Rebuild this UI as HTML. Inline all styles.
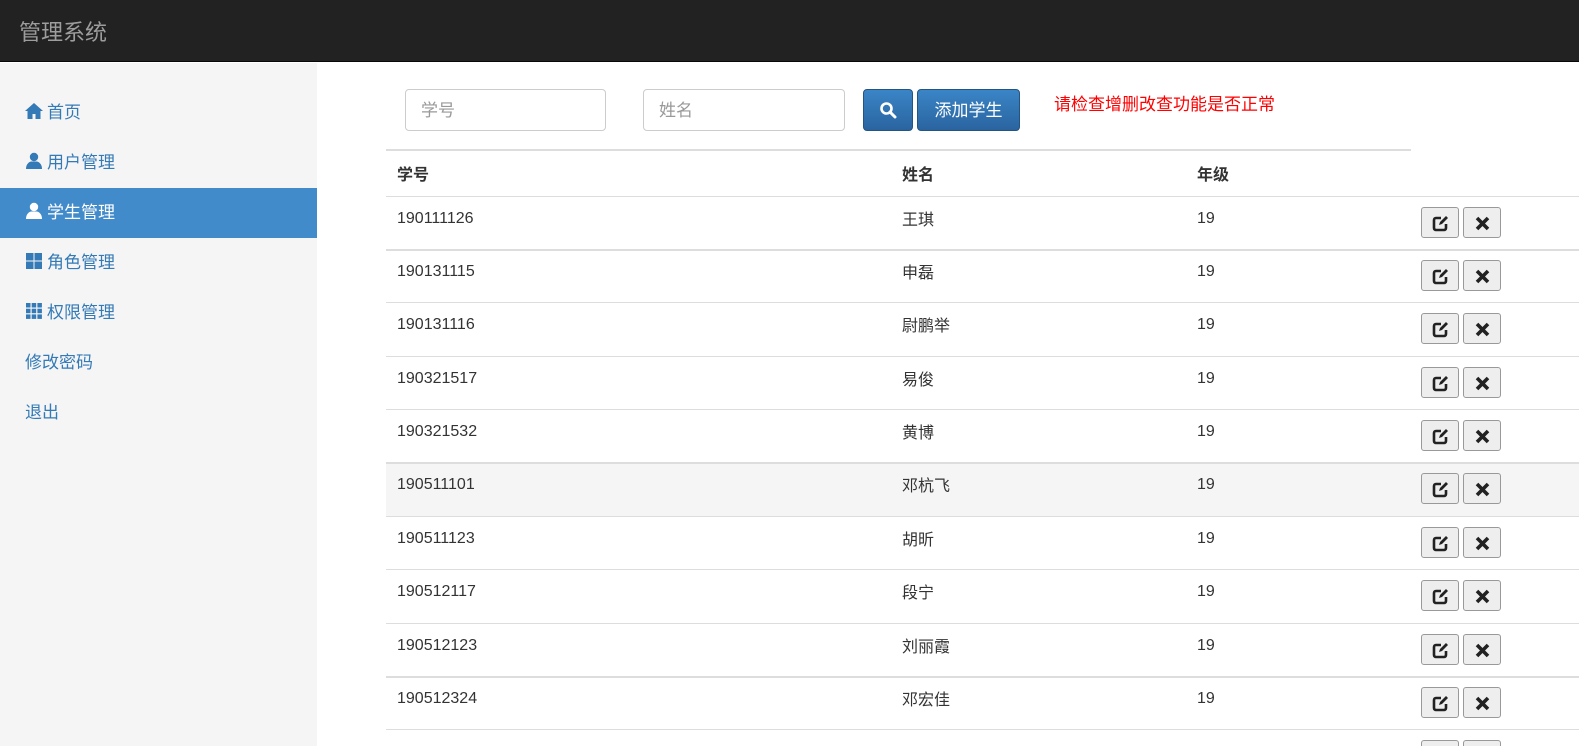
<!DOCTYPE html>
<html><head><meta charset="utf-8"><style>
*{box-sizing:border-box;margin:0;padding:0}
html,body{width:1579px;height:746px;overflow:hidden}
body{background:#fff;font-family:"Liberation Sans","Noto Sans CJK SC",sans-serif;font-size:16px;color:#333;position:relative}
.nav{position:absolute;left:0;top:0;width:1579px;height:62px;background:#222;border-bottom:1px solid #080808}
.brand{position:absolute;left:19px;top:18px;font-size:22px;line-height:30px;color:#9d9d9d}
.side{position:absolute;left:0;top:63px;width:317px;height:683px;background:#f5f5f5}
.mi{position:absolute;left:0;width:317px;height:50px;line-height:50px;padding-left:25px;color:#337ab7;font-size:17px}
.mi.act{background:#428bca;color:#fff}
.mi svg{width:18px;height:18px;vertical-align:-2px;margin-right:4px;fill:currentColor}
.inp{position:absolute;top:89px;height:42px;border:1px solid #ccc;border-radius:4px;padding-left:15px;line-height:42px;color:#999;font-size:17px}
.btn{position:absolute;top:89px;height:42px;border-radius:4px;background:linear-gradient(#3a85c6,#2a64a0);border:1px solid #245580;color:#fff;font-size:17px;text-align:center;line-height:42px}
.red{position:absolute;left:1054px;top:93px;line-height:24px;color:#f00;font-size:17px}
.hl{position:absolute;height:1px;background:#ddd}
.c{position:absolute;font-size:16px;line-height:20px;height:20px}
.th{font-weight:bold}
.b{position:absolute;width:38px;height:31px;border:1px solid #999;border-radius:3px;background:#eee}
.b svg{position:absolute;left:10px;top:7px;width:17px;height:17px}
</style></head><body>
<div class="nav"><div class="brand">管理系统</div></div>
<div class="side">
<div class="mi" style="top:25px"><svg viewBox="0 0 18 18"><path d="M9 1L0 9h2.5v8h5v-5h3v5h5V9H18z"/></svg>首页</div>
<div class="mi" style="top:75px"><svg viewBox="0 0 18 18"><circle cx="9" cy="5" r="4.2"/><path d="M1 17c0-5 3-7 5-7.5h6c2 .5 5 2.5 5 7.5z"/></svg>用户管理</div>
<div class="mi act" style="top:125px"><svg viewBox="0 0 18 18"><circle cx="9" cy="5" r="4.2"/><path d="M1 17c0-5 3-7 5-7.5h6c2 .5 5 2.5 5 7.5z"/></svg>学生管理</div>
<div class="mi" style="top:175px"><svg viewBox="0 0 18 18"><rect x="1" y="1" width="7.5" height="7.5"/><rect x="9.5" y="1" width="7.5" height="7.5"/><rect x="1" y="9.5" width="7.5" height="7.5"/><rect x="9.5" y="9.5" width="7.5" height="7.5"/></svg>角色管理</div>
<div class="mi" style="top:225px"><svg viewBox="0 0 18 18"><rect x="1" y="1" width="4.5" height="4.5"/><rect x="6.7" y="1" width="4.5" height="4.5"/><rect x="12.4" y="1" width="4.5" height="4.5"/><rect x="1" y="6.7" width="4.5" height="4.5"/><rect x="6.7" y="6.7" width="4.5" height="4.5"/><rect x="12.4" y="6.7" width="4.5" height="4.5"/><rect x="1" y="12.4" width="4.5" height="4.5"/><rect x="6.7" y="12.4" width="4.5" height="4.5"/><rect x="12.4" y="12.4" width="4.5" height="4.5"/></svg>权限管理</div>
<div class="mi" style="top:275px">修改密码</div>
<div class="mi" style="top:325px">退出</div>
</div>
<div class="inp" style="left:405px;width:201px">学号</div>
<div class="inp" style="left:643px;width:202px">姓名</div>
<div class="btn" style="left:863px;width:50px"><svg viewBox="0 0 18 18" width="18" height="18" style="vertical-align:-3px"><circle cx="7.5" cy="7.5" r="5" fill="none" stroke="#fff" stroke-width="2.6"/><path d="M11 11l5 5" stroke="#fff" stroke-width="3" stroke-linecap="round"/></svg></div>
<div class="btn" style="left:917px;width:103px">添加学生</div>
<div class="red">请检查增删改查功能是否正常</div>
<div class="hl" style="left:386px;top:149px;width:1025px;height:2px"></div>
<div class="c th" style="left:397px;top:166px">学号</div>
<div class="c th" style="left:902px;top:166px">姓名</div>
<div class="c th" style="left:1197px;top:166px">年级</div>
<div style="position:absolute;left:386px;top:463px;width:1193px;height:53px;background:#f5f5f5"></div>
<div id="rows"></div>
<script>
var d=[["190111126","王琪"],["190131115","申磊"],["190131116","尉鹏举"],["190321517","易俊"],["190321532","黄博"],["190511101","邓杭飞"],["190511123","胡昕"],["190512117","段宁"],["190512123","刘丽霞"],["190512324","邓宏佳"],["",""]];
var t=[196,249,302,356,409,462,516,569,623,676,729],thick={249:1,462:1,676:1},h="";
var ed='<svg viewBox="0 0 17 17"><path d="M9 3H4a2 2 0 0 0-2 2v8a2 2 0 0 0 2 2h8a2 2 0 0 0 2-2V9" fill="none" stroke="#222" stroke-width="2.6"/><path d="M7 10l1-3 6-6 2 2-6 6z" fill="#222"/></svg>';
var x='<svg viewBox="0 0 17 17"><path d="M3 3l11 11M14 3L3 14" stroke="#222" stroke-width="3.6"/></svg>';
for(var i=0;i<t.length;i++){var y=t[i];
h+='<div class="hl" style="left:386px;top:'+y+'px;width:1193px;height:'+(thick[y]?2:1)+'px"></div>';
if(d[i][0]){h+='<div class="c" style="left:397px;top:'+(y+13)+'px">'+d[i][0]+'</div><div class="c" style="left:902px;top:'+(y+15)+'px">'+d[i][1]+'</div><div class="c" style="left:1197px;top:'+(y+13)+'px">19</div>';}
h+='<div class="b" style="left:1421px;top:'+(y+11)+'px">'+ed+'</div><div class="b" style="left:1463px;top:'+(y+11)+'px">'+x+'</div>';}
document.getElementById("rows").innerHTML=h;
</script>
</body></html>
